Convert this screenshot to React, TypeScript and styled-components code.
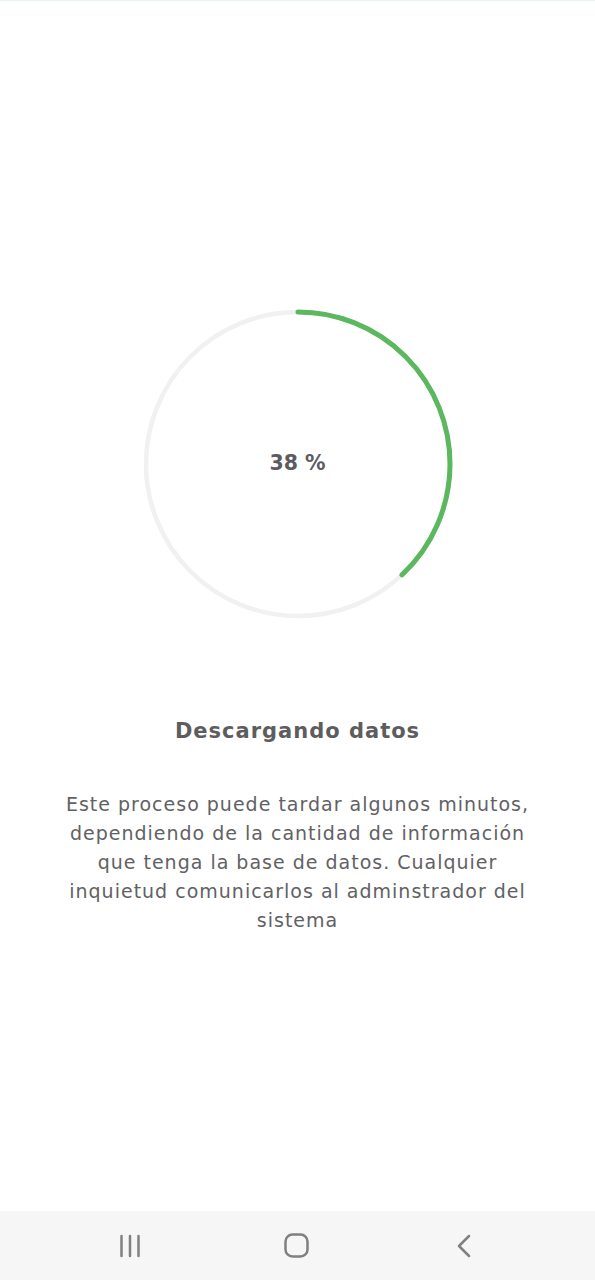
import React from "react";
import styled, { createGlobalStyle } from "styled-components";

const GlobalStyle = createGlobalStyle`
  html, body {
    margin: 0;
    padding: 0;
    background: #ffffff;
  }
  body {
    font-family: "DejaVu Sans", "Open Sans", "Liberation Sans", sans-serif;
    -webkit-font-smoothing: antialiased;
  }
`;

const Page = styled.div`
  width: 595px;
  height: 1280px;
  display: flex;
  flex-direction: column;
  background: #ffffff;
  border-top: 1px solid #eaf4f2;
  box-sizing: border-box;
`;

const Main = styled.main`
  flex: 1;
  display: flex;
  flex-direction: column;
  align-items: center;
  padding-top: 308px;
`;

const Ring = styled.div`
  display: grid;
  place-items: center;
  width: 310px;
  height: 310px;
  & > * {
    grid-area: 1 / 1;
  }
`;

const Percent = styled.span`
  font-size: 20.5px;
  font-weight: 700;
  color: #5c5c5f;
  margin-bottom: 2px;
`;

const Title = styled.h1`
  margin: 97px 0 0;
  font-size: 21px;
  font-weight: 700;
  letter-spacing: 1px;
  color: #5d5d60;
  line-height: 30px;
  text-align: center;
`;

const Body = styled.p`
  margin: 44px 0 0;
  width: 480px;
  font-size: 19px;
  font-weight: 400;
  letter-spacing: 1px;
  line-height: 29px;
  color: #616164;
  text-align: center;
`;

const NavBar = styled.nav`
  height: 69px;
  background: #f6f6f6;
  display: flex;
  align-items: center;
  justify-content: center;
  gap: 107px;
  padding-right: 2px;
`;

const NavButton = styled.div`
  width: 60px;
  height: 40px;
  display: flex;
  align-items: center;
  justify-content: center;
  color: #808080;
`;

const progress = 0.38;
const R = 152;
const C = 2 * Math.PI * R;

export default function App() {
  return (
    <>
      <GlobalStyle />
      <Page>
        <Main>
          <Ring>
            <svg width="310" height="310" viewBox="0 0 310 310">
              <circle cx="155" cy="155" r={R} fill="none" stroke="#f1f1f1" strokeWidth="4.5" />
              <circle
                cx="155"
                cy="155"
                r={R}
                fill="none"
                stroke="#5cb85f"
                strokeWidth="5"
                strokeLinecap="round"
                strokeDasharray={`${C * progress} ${C}`}
                transform="rotate(-90 155 155)"
              />
            </svg>
            <Percent>38 %</Percent>
          </Ring>
          <Title>Descargando datos</Title>
          <Body>
            Este proceso puede tardar algunos minutos, dependiendo de la cantidad de información que tenga la base de datos. Cualquier inquietud comunicarlos al adminstrador del sistema
          </Body>
        </Main>
        <NavBar>
          <NavButton>
            <svg width="24" height="24" viewBox="0 0 24 24">
              <g stroke="currentColor" strokeWidth="2.5" strokeLinecap="round">
                <line x1="3.5" y1="2" x2="3.5" y2="22" />
                <line x1="12" y1="2" x2="12" y2="22" />
                <line x1="20.5" y1="2" x2="20.5" y2="22" />
              </g>
            </svg>
          </NavButton>
          <NavButton>
            <svg width="25" height="25" viewBox="0 0 25 25">
              <rect x="1.5" y="1.5" width="22" height="22" rx="7" fill="none" stroke="currentColor" strokeWidth="2.5" />
            </svg>
          </NavButton>
          <NavButton>
            <svg width="14" height="24" viewBox="0 0 14 24">
              <polyline points="12,2 2,12 12,22" fill="none" stroke="currentColor" strokeWidth="2.5" strokeLinecap="round" strokeLinejoin="round" />
            </svg>
          </NavButton>
        </NavBar>
      </Page>
    </>
  );
}
